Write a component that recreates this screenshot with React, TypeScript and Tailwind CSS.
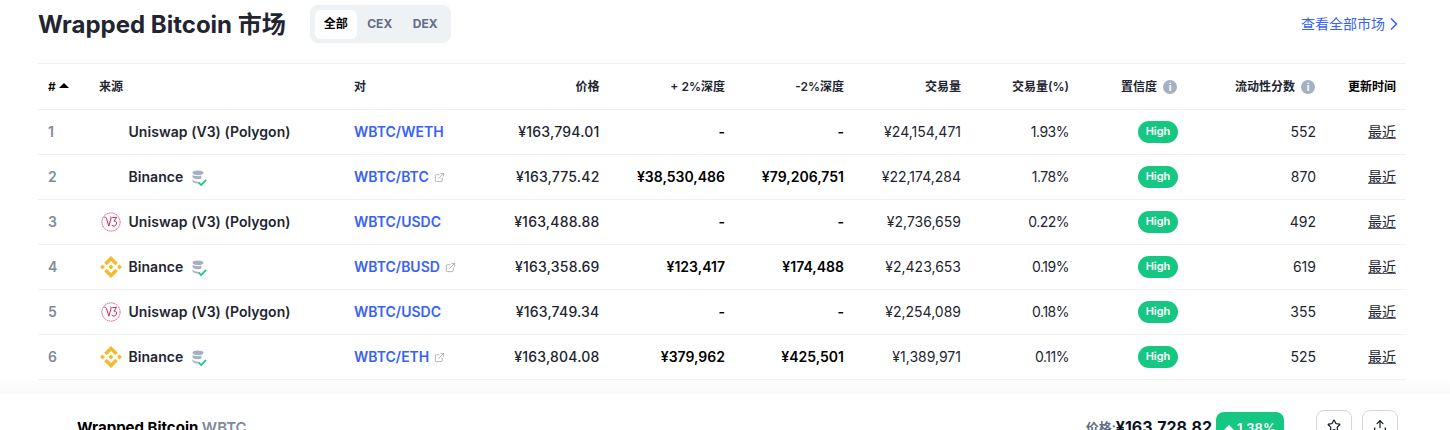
import { ChevronRight, ExternalLink, Star, Upload } from 'lucide-react';

type Row = {
  id: number;
  source: string;
  logo?: 'uni' | 'bnb';
  verified?: boolean;
  pair: string;
  external?: boolean;
  price: string;
  up: string;
  down: string;
  volume: string;
  pct: string;
  score: number;
};

const rows: Row[] = [
  { id: 1, source: 'Uniswap (V3) (Polygon)', pair: 'WBTC/WETH', price: '¥163,794.01', up: '-', down: '-', volume: '¥24,154,471', pct: '1.93%', score: 552 },
  { id: 2, source: 'Binance', verified: true, pair: 'WBTC/BTC', external: true, price: '¥163,775.42', up: '¥38,530,486', down: '¥79,206,751', volume: '¥22,174,284', pct: '1.78%', score: 870 },
  { id: 3, source: 'Uniswap (V3) (Polygon)', logo: 'uni', pair: 'WBTC/USDC', price: '¥163,488.88', up: '-', down: '-', volume: '¥2,736,659', pct: '0.22%', score: 492 },
  { id: 4, source: 'Binance', logo: 'bnb', verified: true, pair: 'WBTC/BUSD', external: true, price: '¥163,358.69', up: '¥123,417', down: '¥174,488', volume: '¥2,423,653', pct: '0.19%', score: 619 },
  { id: 5, source: 'Uniswap (V3) (Polygon)', logo: 'uni', pair: 'WBTC/USDC', price: '¥163,749.34', up: '-', down: '-', volume: '¥2,254,089', pct: '0.18%', score: 355 },
  { id: 6, source: 'Binance', logo: 'bnb', verified: true, pair: 'WBTC/ETH', external: true, price: '¥163,804.08', up: '¥379,962', down: '¥425,501', volume: '¥1,389,971', pct: '0.11%', score: 525 },
];

function UniLogo() {
  return (
    <svg width="20" height="20" viewBox="0 0 22 22" fill="none" className="ml-[1px] shrink-0">
      <circle cx="11" cy="11" r="10" stroke="#e0336f" strokeWidth="1" strokeDasharray="1.4 0.7" />
      <path d="M3.6 5.6 C5 5.4 5.6 6 6.2 7.6 L8.6 15.6 L11.2 6.4 C11.4 5.7 10.9 5.3 10 5.4" stroke="#c9245f" strokeWidth="1.1" />
      <path d="M12.4 6 H17.2 L14.2 10 C16.6 9.6 17.6 11.4 17 13.2 C16.4 15.4 13.6 16.2 11.8 14.6" stroke="#c9245f" strokeWidth="1.1" />
    </svg>
  );
}

function BnbLogo() {
  return (
    <svg width="22" height="22" viewBox="0 0 32 32" fill="#f3ba2f" className="shrink-0">
      <path d="M9.79 13.44 16 7.24l6.21 6.21 3.61-3.61L16 0 6.18 9.82zM0 16l3.61-3.61L7.22 16l-3.61 3.61zM9.79 18.56 16 24.76l6.21-6.21 3.61 3.61L16 32l-9.82-9.82zM24.78 16l3.61-3.61L32 16l-3.61 3.61zM19.66 16 16 12.34 13.3 15.04l-.31.31-.64.64L16 19.66z" />
    </svg>
  );
}

function VerifiedIcon() {
  return (
    <svg width="16" height="17" viewBox="0 0 16 17" fill="none" className="ml-[8px] mt-[2px] shrink-0">
      <ellipse cx="7" cy="2.8" rx="5.5" ry="2.4" fill="#a6b0c3" />
      <path d="M1.5 5v1.8c0 1.3 2.5 2.4 5.5 2.4 1.2 0 2.4-.2 3.3-.5V5.6c-1 .4-2.1.6-3.3.6-2.6 0-4.7-.5-5.5-1.2z" fill="#a6b0c3" />
      <path d="M1.5 9.2V11c0 1.3 2.5 2.4 5.5 2.4l.8-.1-1.6-1.7c-2.2-.1-4-.7-4.7-2.4z" fill="#a6b0c3" />
      <path d="M7.5 12.4l2.6 2.6 5-5.2" stroke="#16c784" strokeWidth="1.7" />
    </svg>
  );
}

function InfoDot() {
  return (
    <span className="ml-[6px] inline-flex h-[14px] w-[14px] items-center justify-center rounded-full bg-[#a6b0c3] text-[10px] font-bold leading-none text-white">
      i
    </span>
  );
}

export default function App() {
  const th = 'h-[45px] pr-[10px] text-right text-xs font-semibold text-[#222531]';
  const td = 'h-[45px] border-t border-[#eff2f5] pr-[10px] text-right text-sm text-[#222531]';

  return (
    <div className="h-[430px] w-[1450px] overflow-hidden bg-white font-['Inter','Noto_Sans_CJK_SC',sans-serif]">
      <div className="flex h-[63px] items-start pl-[38px] pr-[46px]">
        <h2 className="mt-[10px] text-2xl font-bold leading-[30px] text-[#222531]">Wrapped Bitcoin 市场</h2>
        <div className="ml-[24px] mt-[5px] flex h-[38px] items-center rounded-lg bg-[#eff2f5] py-[5px] pl-[5px] pr-[3px] text-xs font-bold text-[#616e85]">
          <span className="flex h-[29px] w-[42px] items-center justify-center rounded-md bg-white text-black">全部</span>
          <span className="flex h-[29px] w-[46px] items-center justify-center">CEX</span>
          <span className="flex h-[29px] w-[45px] items-center justify-center">DEX</span>
        </div>
        <a className="ml-auto mt-[14px] flex items-center text-sm leading-[20px] text-[#3861fb]">
          查看全部市场
          <ChevronRight size={20} strokeWidth={2} className="ml-[-1px]" />
        </a>
      </div>

      <table className="ml-[38px] w-[1368px] table-fixed border-separate border-spacing-0 border-t border-[#eff2f5]">
        <colgroup>
          <col className="w-[52px]" />
          <col className="w-[254px]" />
          <col className="w-[146px]" />
          <col className="w-[119.5px]" />
          <col className="w-[125.5px]" />
          <col className="w-[119px]" />
          <col className="w-[117px]" />
          <col className="w-[108px]" />
          <col className="w-[109px]" />
          <col className="w-[138px]" />
          <col className="w-[80px]" />
        </colgroup>
        <thead>
          <tr>
            <th className={`${th} pl-[10px] !text-left`}>
              <span className="flex items-center text-black">
                #
                <span className="ml-[3px] mb-[2px] h-0 w-0 border-x-[5px] border-b-[5px] border-x-transparent border-b-black" />
              </span>
            </th>
            <th className={`${th} pl-[9px] !text-left`}>来源</th>
            <th className={`${th} pl-[10px] !text-left`}>对</th>
            <th className={th}>价格</th>
            <th className={th}>+ 2%深度</th>
            <th className={th}>-2%深度</th>
            <th className={th}>交易量</th>
            <th className={th}>交易量(%)</th>
            <th className={th}>
              <span className="mr-[1px] inline-flex items-center">置信度<InfoDot /></span>
            </th>
            <th className={th}>
              <span className="mr-[1px] inline-flex items-center">流动性分数<InfoDot /></span>
            </th>
            <th className={`${th} !text-black`}>更新时间</th>
          </tr>
        </thead>
        <tbody>
          {rows.map(r => (
            <tr key={r.id}>
              <td className={`${td} pl-[10px] !text-left font-semibold !text-[#808a9d]`}>{r.id}</td>
              <td className={`${td} pl-[10px] !text-left`}>
                <div className="flex items-center font-semibold tracking-[0.05px]">
                  <span className="flex w-[28.5px] shrink-0 items-center">
                    {r.logo === 'uni' && <UniLogo />}
                    {r.logo === 'bnb' && <BnbLogo />}
                  </span>
                  {r.source}
                  {r.verified && <VerifiedIcon />}
                </div>
              </td>
              <td className={`${td} pl-[10px] !text-left`}>
                <a className="flex items-center font-semibold text-[#3861fb]">
                  {r.pair}
                  {r.external && <ExternalLink size={11} strokeWidth={1.5} className="ml-[5px] text-[#8f96a3]" />}
                </a>
              </td>
              <td className={`${td} font-medium tracking-[0.2px]`}>{r.price}</td>
              <td className={`${td} font-semibold text-black`}>{r.up}</td>
              <td className={`${td} font-semibold text-black`}>{r.down}</td>
              <td className={td}>{r.volume}</td>
              <td className={td}>
                <span className="tracking-[-0.5px]">{r.pct}</span>
              </td>
              <td className={td}>
                <span className="inline-flex h-[22px] w-[40px] items-center justify-center rounded-full bg-[#16c784] align-middle text-[11px] font-semibold text-white">
                  High
                </span>
              </td>
              <td className={td}>{r.score}</td>
              <td className={td}>
                <span className="underline decoration-[#58606e] underline-offset-[1px]">最近</span>
              </td>
            </tr>
          ))}
          <tr>
            <td colSpan={11} className="h-0 border-t border-[#eff2f5]" />
          </tr>
        </tbody>
      </table>

      <div className="h-[14px] bg-gradient-to-b from-white to-[#f8f8f9]" />

      <div className="flex h-[36px] items-start overflow-hidden bg-white pl-[77px] pr-[52px]">
        <div className="mt-[24px] text-[15px] font-bold leading-[20px] text-black">
          Wrapped Bitcoin <span className="font-semibold text-[#808a9d]">WBTC</span>
        </div>
        <div className="ml-auto mt-[20px] flex items-start">
          <span className="mt-[4px] text-[13px] font-semibold leading-[18px] text-[#616e85]">价格:</span>
          <span className="mt-[2px] text-base font-bold leading-[22px] text-[#0d1421]">¥163,728.82</span>
          <span className="ml-[4px] mt-[-2px] flex h-[32px] w-[68px] items-start justify-center rounded-lg bg-[#16c784] pt-[7px] text-[13px] font-semibold leading-[18px] text-white">
            <span className="mr-[3px] mt-[6px] h-0 w-0 border-x-[5px] border-b-[5px] border-x-transparent border-b-white" />
            1.38%
          </span>
          <span className="ml-[32px] mt-[-4px] flex h-[36px] w-[36px] items-start justify-center rounded-lg border border-[#cfd6e4] pt-[8px]">
            <Star size={14} strokeWidth={2} className="text-[#0d1421]" />
          </span>
          <span className="ml-[10px] mt-[-4px] flex h-[36px] w-[36px] items-start justify-center rounded-lg border border-[#cfd6e4] pt-[8px]">
            <Upload size={14} strokeWidth={2} className="text-[#0d1421]" />
          </span>
        </div>
      </div>
    </div>
  );
}
